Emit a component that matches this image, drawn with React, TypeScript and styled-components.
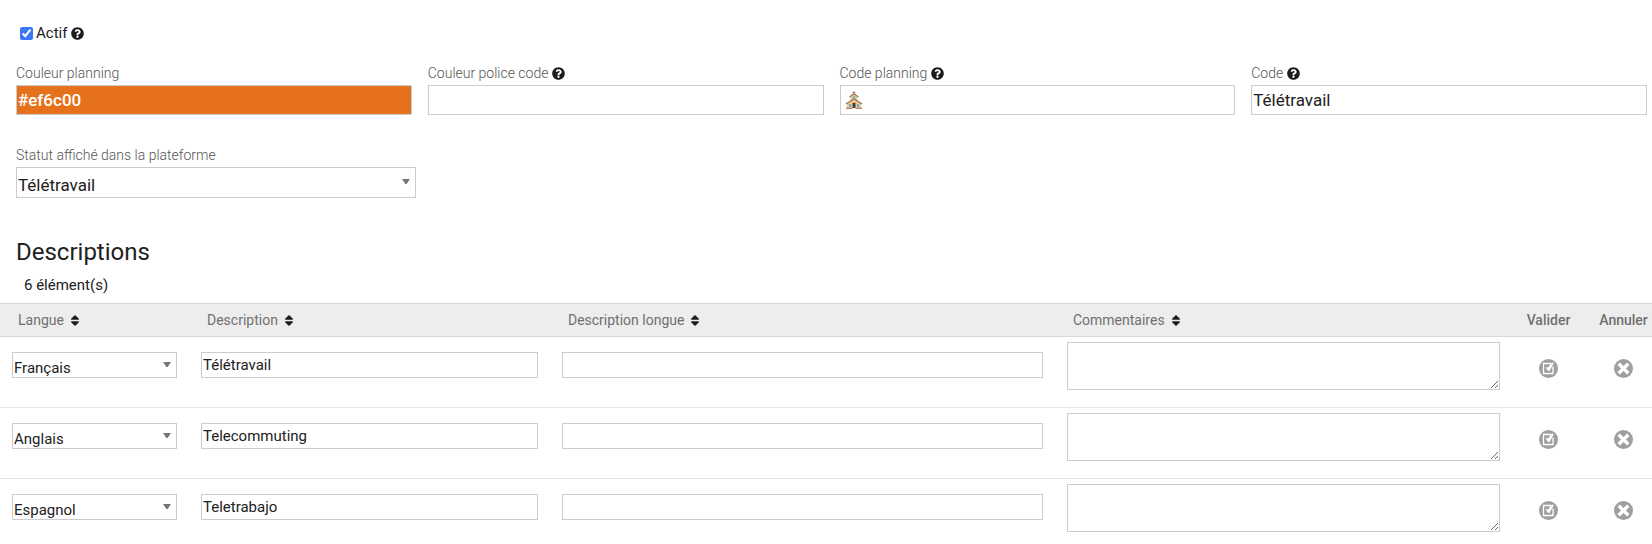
import React from "react";
import styled, { createGlobalStyle } from "styled-components";
import { FaQuestionCircle } from "react-icons/fa";

const GlobalStyle = createGlobalStyle`
  *, *::before, *::after { box-sizing: border-box; }
  body {
    margin: 0;
    background: #fff;
    color: #212121;
    font-family: Roboto, "Liberation Sans", sans-serif;
    font-size: 15px;
  }
  input, select, textarea, button { font-family: inherit; color: inherit; }
`;

const Page = styled.main`
  height: 100vh;
  overflow: hidden;
  padding-top: 22px;
`;

const ActiveRow = styled.div`
  display: flex;
  align-items: center;
  height: 22px;
  padding-left: 20px;
`;

const Checkbox = styled.input`
  width: 13px;
  height: 13px;
  margin: 0 3px 0 0;
  accent-color: #3b76f6;
`;

const HelpIcon = styled(FaQuestionCircle)`
  width: 13px;
  height: 13px;
  margin-left: 4px;
  color: #1c1c1c;
`;

const FieldGrid = styled.div`
  display: grid;
  grid-template-columns: repeat(4, minmax(0, 1fr));
  gap: 16px;
  padding: 19px 5px 0 16px;
`;

const Field = styled.div`
  display: flex;
  flex-direction: column;
`;

const StatusField = styled(Field)`
  width: 400px;
  max-width: 100%;
  margin: 30px 0 0 16px;
`;

const LabelRow = styled.div`
  display: flex;
  align-items: center;
  height: 22px;
  padding-bottom: 2px;
  font-size: 14px;
  font-weight: 300;
  color: #555;
`;

const Control = styled.div`
  display: grid;
  align-items: center;
  width: 100%;
  & > * { grid-area: 1 / 1; }
`;

const TextInput = styled.input<{ $compact?: boolean; $fill?: string }>`
  display: block;
  width: 100%;
  min-width: 0;
  height: ${(p) => (p.$compact ? 26 : 30)}px;
  padding: 0 1px;
  border: 1px solid #ccc;
  border-radius: 0;
  outline: none;
  background: ${(p) => p.$fill ?? "#fff"};
  color: ${(p) => (p.$fill ? "#fff" : "#212121")};
  font-size: ${(p) => (p.$compact ? 15 : 17)}px;
  font-weight: ${(p) => (p.$fill ? 500 : 400)};
`;

const SelectBox = styled.select<{ $compact?: boolean }>`
  appearance: none;
  width: 100%;
  height: ${(p) => (p.$compact ? 26 : 31)}px;
  padding: ${(p) => (p.$compact ? 5 : 4)}px 24px 0 1px;
  border: 1px solid #ccc;
  border-radius: 0;
  outline: none;
  background: #fff;
  font-size: ${(p) => (p.$compact ? 15 : 17)}px;
`;

const Arrow = styled.svg`
  justify-self: end;
  width: 8px;
  height: 5px;
  margin: 0 6px 2px 0;
  pointer-events: none;
  fill: #757575;
`;

const ChurchIcon = styled.svg`
  width: 18px;
  height: 18px;
  margin-left: 5px;
  pointer-events: none;
`;

const Title = styled.h2`
  margin: 40px 0 0 16px;
  font-size: 24px;
  font-weight: 400;
  line-height: 28px;
`;

const Count = styled.p`
  margin: 10px 0 8px 24px;
  font-size: 15px;
  line-height: 19px;
`;

const Table = styled.table`
  width: 100%;
  table-layout: fixed;
  border-collapse: separate;
  border-spacing: 0;
`;

const Column = styled.col<{ $width?: string }>`
  width: ${(p) => p.$width ?? "auto"};
`;

const HeadCell = styled.th`
  height: 34px;
  padding: 0 0 0 18px;
  border: solid #d8d8d8;
  border-width: 1px 0;
  background: #ededed;
  color: #707070;
  font-size: 14px;
  font-weight: 400;
  text-align: left;
  white-space: nowrap;
`;

const ActionHead = styled(HeadCell)<{ $last?: boolean }>`
  padding: 0 0 1px ${(p) => (p.$last ? 10 : 0)}px;
  font-weight: 500;
  text-align: center;
`;

const SortButton = styled.button`
  display: inline-flex;
  align-items: center;
  gap: 7px;
  padding: 0;
  border: 0;
  background: none;
  font-size: inherit;
  font-weight: inherit;
`;

const SortGlyph = styled.svg`
  width: 8px;
  height: 11px;
  fill: #1c1c1c;
`;

const Cell = styled.td`
  height: 71px;
  padding: 0 12px 14px;
  border-bottom: 1px solid #e5e5e5;
`;

const CommentCell = styled(Cell)`
  padding: 5px 12px 0;
  vertical-align: top;
`;

const ActionCell = styled(Cell)<{ $last?: boolean }>`
  padding: 0 0 8px ${(p) => (p.$last ? 10 : 0)}px;
  text-align: center;
`;

const Comment = styled.textarea`
  display: block;
  width: 100%;
  height: 48px;
  border: 1px solid #ccc;
  outline: none;
  font-size: 15px;
`;

const IconButton = styled.button`
  display: inline-flex;
  padding: 0;
  border: 0;
  background: none;
  vertical-align: middle;
`;

function Select({ id, label, value, options, compact }: {
  id?: string; label?: string; value: string; options: string[]; compact?: boolean;
}) {
  return (
    <Control>
      <SelectBox id={id} aria-label={label} defaultValue={value} $compact={compact}>
        {options.map((o) => <option key={o}>{o}</option>)}
      </SelectBox>
      <Arrow viewBox="0 0 8 5" aria-hidden="true"><path d="M0 0h8L4.6 5H3.4z" /></Arrow>
    </Control>
  );
}

function SortHead({ children }: { children: string }) {
  return (
    <HeadCell scope="col">
      <SortButton type="button">
        {children}
        <SortGlyph viewBox="0 0 8 11" aria-hidden="true">
          <path d="M4 0l3.7 3.6c.5.5.2 1.1-.4 1.1H.7C.1 4.700-.2 4.100.3 3.600zM4 11L.3 7.400C-.2 6.900.1 6.300.7 6.300h6.600c.6 0 .9.6.4 1.100z" />
        </SortGlyph>
      </SortButton>
    </HeadCell>
  );
}

function Church() {
  return (
    <ChurchIcon viewBox="0 0 18 18" aria-hidden="true">
      <path d="M8.500 0h1v1h1v1h-1v2h-1V2h-1V1h1z" fill="#a98686" />
      <path d="M5.500 5.500L9 3l3.500 2.500V9L16 12v4.500H2V12l3.500-3z" fill="#f3ca83" />
      <path d="M4.500 6L9 2.800 13.500 6M.8 13L9 8l8.200 5" fill="none" stroke="#9b7462" strokeWidth="1.300" />
      <path d="M7.700 5.500h2.600v2.300H7.700z" fill="#56b4dc" />
      <path d="M4 13h2v3H4zM12 13h2v3h-2z" fill="#56b4dc" />
      <path d="M7.500 11.800h3V17h-3z" fill="#51354f" />
      <path d="M1 16.500h6.500V18H1zM10.500 16.500H17V18h-6.500z" fill="#b08461" />
    </ChurchIcon>
  );
}

function ValidateIcon() {
  return (
    <svg width="19" height="19" viewBox="0 0 19 19" aria-hidden="true">
      <circle cx="9.500" cy="9.500" r="9.500" fill="#9da09f" />
      <path d="M12 4.500H4.500v10h9.500V7.500" fill="none" stroke="#fff" strokeWidth="1.300" />
      <path d="M6.500 8l2.500.6L13 3.600l1.800.4-4.300 8-2-.6z" fill="#fff" />
    </svg>
  );
}

function CancelIcon() {
  return (
    <svg width="19" height="19" viewBox="0 0 19 19" aria-hidden="true">
      <circle cx="9.500" cy="9.500" r="9.500" fill="#9da09f" />
      <path d="M4.700 4.700l9.600 9.600M14.300 4.700l-9.600 9.600" stroke="#fff" strokeWidth="3.400" />
    </svg>
  );
}

const languages = ["Français", "Anglais", "Espagnol"];
const rows = [
  { language: "Français", description: "Télétravail" },
  { language: "Anglais", description: "Telecommuting" },
  { language: "Espagnol", description: "Teletrabajo" },
];

export default function App() {
  return (
    <>
      <GlobalStyle />
      <Page>
        <ActiveRow>
          <Checkbox id="active" type="checkbox" defaultChecked />
          <label htmlFor="active">Actif</label>
          <HelpIcon />
        </ActiveRow>

        <FieldGrid>
          <Field>
            <LabelRow><label htmlFor="color">Couleur planning</label></LabelRow>
            <TextInput id="color" defaultValue="#ef6c00" $fill="#e6711c" />
          </Field>
          <Field>
            <LabelRow><label htmlFor="font-color">Couleur police code</label><HelpIcon /></LabelRow>
            <TextInput id="font-color" />
          </Field>
          <Field>
            <LabelRow><label htmlFor="planning-code">Code planning</label><HelpIcon /></LabelRow>
            <Control>
              <TextInput id="planning-code" />
              <Church />
            </Control>
          </Field>
          <Field>
            <LabelRow><label htmlFor="code">Code</label><HelpIcon /></LabelRow>
            <TextInput id="code" defaultValue="Télétravail" />
          </Field>
        </FieldGrid>

        <StatusField>
          <LabelRow><label htmlFor="status">Statut affiché dans la plateforme</label></LabelRow>
          <Select id="status" value="Télétravail" options={["Télétravail"]} />
        </StatusField>

        <Title>Descriptions</Title>
        <Count>6 élément(s)</Count>

        <Table>
          <colgroup>
            <Column $width="11.44%" />
            <Column $width="21.85%" />
            <Column $width="30.57%" />
            <Column />
            <Column $width="73px" />
            <Column $width="67px" />
          </colgroup>
          <thead>
            <tr>
              <SortHead>Langue</SortHead>
              <SortHead>Description</SortHead>
              <SortHead>Description longue</SortHead>
              <SortHead>Commentaires</SortHead>
              <ActionHead scope="col">Valider</ActionHead>
              <ActionHead scope="col" $last>Annuler</ActionHead>
            </tr>
          </thead>
          <tbody>
            {rows.map((row) => (
              <tr key={row.language}>
                <Cell><Select label="Langue" value={row.language} options={languages} compact /></Cell>
                <Cell><TextInput aria-label="Description" defaultValue={row.description} $compact /></Cell>
                <Cell><TextInput aria-label="Description longue" $compact /></Cell>
                <CommentCell><Comment aria-label="Commentaires" /></CommentCell>
                <ActionCell><IconButton type="button" aria-label="Valider"><ValidateIcon /></IconButton></ActionCell>
                <ActionCell $last><IconButton type="button" aria-label="Annuler"><CancelIcon /></IconButton></ActionCell>
              </tr>
            ))}
          </tbody>
        </Table>
      </Page>
    </>
  );
}
